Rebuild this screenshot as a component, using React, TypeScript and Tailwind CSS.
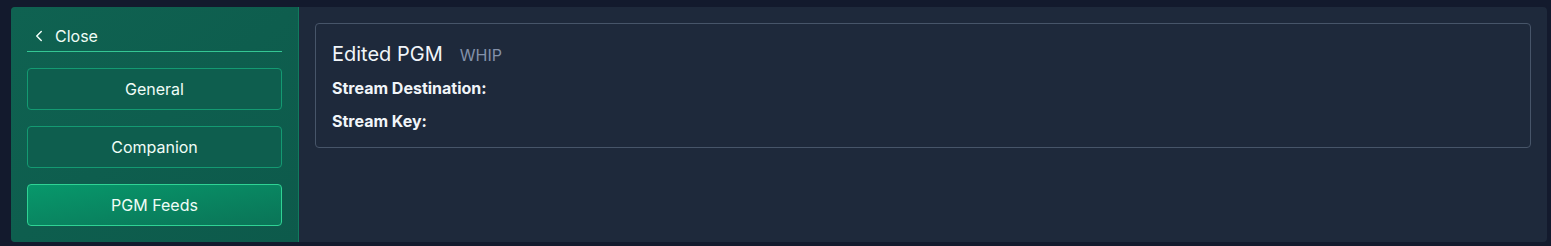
import { ChevronLeft } from "lucide-react";

const TABS = ["General", "Companion", "PGM Feeds"];

export default function App() {
  const active = "PGM Feeds";

  return (
    <div className="h-[246px] bg-[#131a2d] pt-[7px] pl-[11px] pr-[4px] pb-[4px] font-['Inter',sans-serif]">
      <div className="flex h-[235px] overflow-hidden rounded bg-[#1e293b]">
        <aside className="w-72 shrink-0 border-r border-[#117a5e] bg-gradient-to-br from-[#0f6251] to-[#0d5a4b] px-4 pt-4">
          <button className="flex h-[29px] w-full items-start gap-[7px] border-b border-[#34c794] pl-[3px] pt-[1px] text-base text-[#f0fdf7]">
            <ChevronLeft className="mt-[3px] h-[18px] w-[18px]" strokeWidth={2} />
            <span>Close</span>
          </button>
          <nav className="mt-4 flex flex-col gap-4">
            {TABS.map((tab) => (
              <button
                key={tab}
                className={
                  tab === active
                    ? "h-[42px] w-full rounded border border-[#2fd394] bg-gradient-to-br from-[#07986b] to-[#0a7457] text-base text-[#f0fdf7]"
                    : "h-[42px] w-full rounded border border-[#149a72] bg-[#0e5e4e] text-base text-[#f0fdf7]"
                }
              >
                {tab}
              </button>
            ))}
          </nav>
        </aside>

        <main className="flex-1 p-4">
          <div className="rounded border border-[#475569] px-4 pt-4 pb-[14px]">
            <div className="flex items-baseline gap-[17px]">
              <h2 className="text-xl leading-7 text-[#f1f5f9]">Edited PGM</h2>
              <span className="text-base text-[#8391aa]">WHIP</span>
            </div>
            <p className="mt-2 text-base font-bold leading-6 text-[#f1f5f9]">Stream Destination:</p>
            <p className="mt-[9px] text-base font-bold leading-6 text-[#f1f5f9]">Stream Key:</p>
          </div>
        </main>
      </div>
    </div>
  );
}
